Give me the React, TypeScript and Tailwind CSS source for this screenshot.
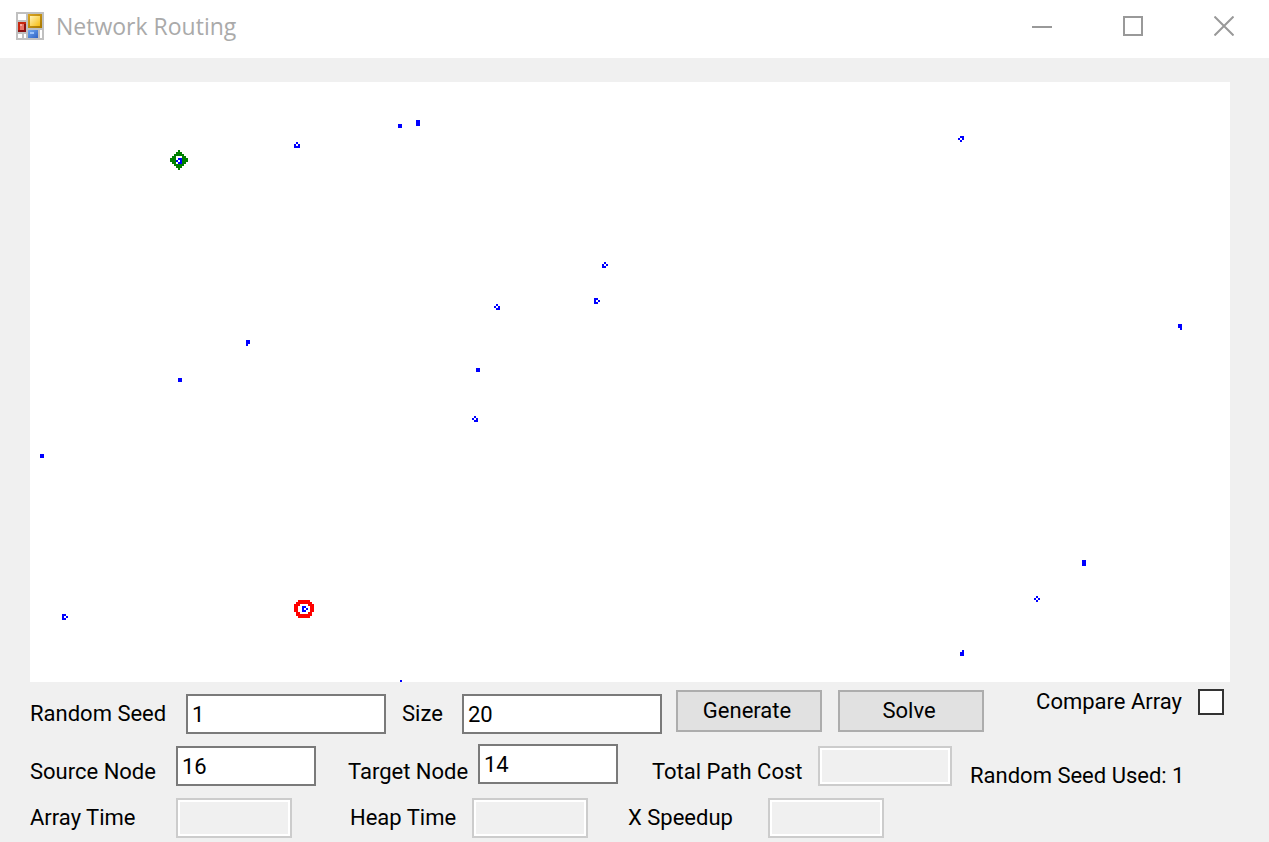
import { useState } from "react";
import type { ReactNode } from "react";

type Sprite = { x: number; y: number; rows: string[] };

const BLOCK = ["##", "##"];
const TALL = ["##", "##", "##"];
const ARROW = ["##.", "#.#", "##."];

// Canvas cells, each one drawn as a unit square of the view box.
const nodes: Sprite[] = [
  { x: 132, y: 30, rows: [".#.", "#.#", "###"] },
  { x: 184, y: 21, rows: BLOCK },
  { x: 193, y: 19, rows: TALL },
  { x: 464, y: 27, rows: [".##", "#.#", ".#."] },
  { x: 286, y: 90, rows: [".#.", "#.#", "##."] },
  { x: 282, y: 108, rows: ARROW },
  { x: 232, y: 111, rows: [".#.", "#.#", ".##"] },
  { x: 223, y: 143, rows: BLOCK },
  { x: 221, y: 167, rows: [".#.", "#.#", ".##"] },
  { x: 108, y: 129, rows: ["##", "##", "#."] },
  { x: 74, y: 148, rows: BLOCK },
  { x: 5, y: 186, rows: BLOCK },
  { x: 16, y: 266, rows: ARROW },
  { x: 136, y: 262, rows: ARROW },
  { x: 185, y: 299, rows: ["#"] },
  { x: 574, y: 121, rows: ["##", "##", ".#"] },
  { x: 526, y: 239, rows: TALL },
  { x: 502, y: 257, rows: [".#.", "#.#", ".#."] },
  { x: 465, y: 284, rows: [".#", "##", "##"] },
  { x: 73, y: 38, rows: [".##", "#.#", ".##"] },
];

const sourceMarker: Sprite = {
  x: 70,
  y: 34,
  rows: [
    "....#....",
    "...###...",
    "..#####..",
    ".##...##.",
    "###...###",
    "###...###",
    ".##...##.",
    "..#####..",
    "...###...",
    "....#....",
  ],
};

const targetMarker: Sprite = {
  x: 132,
  y: 259,
  rows: [
    "..######..",
    ".########.",
    "###....###",
    "##......##",
    "##......##",
    "##......##",
    ".##....##.",
    ".########.",
    "..######..",
  ],
};

function spritePath({ x, y, rows }: Sprite) {
  return rows
    .flatMap((row, r) =>
      [...row].map((c, i) => (c === "#" ? `M${x + i} ${y + r}h1v1h-1z` : "")),
    )
    .join("");
}

function AppIcon() {
  return (
    <svg viewBox="0 0 14 14" className="size-7" shapeRendering="crispEdges" aria-hidden="true">
      <defs>
        <linearGradient id="gold" x1="0" y1="0" x2="1" y2="1">
          <stop offset="0" stopColor="#fff3b8" />
          <stop offset="1" stopColor="#f7bd10" />
        </linearGradient>
        <linearGradient id="goldEdge" x1="0" y1="0" x2="1" y2="1">
          <stop offset="0" stopColor="#dba520" />
          <stop offset="1" stopColor="#a87800" />
        </linearGradient>
        <linearGradient id="sky" x1="0" y1="0" x2="1" y2="1">
          <stop offset="0" stopColor="#6fa8f0" />
          <stop offset="1" stopColor="#2f62c4" />
        </linearGradient>
      </defs>
      <path fill="#c0c0c0" d="M0 0h14v14H0z" />
      <path fill="#fff" d="M1 1h4v3H1zM1 11h2v2H1zM4 11h1v2H4zM12 9h1v4h-1z" />
      <path fill="url(#goldEdge)" d="M6 1h7v7H6z" />
      <path fill="url(#gold)" d="M7 2h5v5H7z" />
      <path fill="#c8260f" d="M1 5h4v5H1z" />
      <path fill="#8c1212" d="M4 6h1v4H1V9h3z" />
      <path fill="#e87468" d="M2 6h2v3H2z" />
      <path fill="#f7aaa2" d="M2 6h1v1H2z" />
      <path fill="url(#sky)" d="M6 9h5v4H6z" />
      <path fill="#9cc4fa" d="M7 10h2v1H7z" />
    </svg>
  );
}

function CaptionButton({ label, children }: { label: string; children: ReactNode }) {
  return (
    <button type="button" aria-label={label} className="flex h-13 w-[91px] items-center justify-center">
      <svg viewBox="0 0 20 20" className="size-5" fill="none" stroke="#999" strokeWidth="2" aria-hidden="true">
        {children}
      </svg>
    </button>
  );
}

const entry = "h-10 border-2 border-[#7a7a7a] bg-white px-1 leading-8 outline-none";
const readout = "h-10 border-2 border-[#ccc] bg-[#f0f0f0] px-1 shadow-[inset_0_0_0_2px_#fff] outline-none";
const action = "h-[42px] w-[146px] shrink-0 border-2 border-[#adadad] bg-[#e1e1e1] pr-1";

export default function App() {
  const [seed, setSeed] = useState("1");
  const [size, setSize] = useState("20");
  const [source, setSource] = useState("16");
  const [target, setTarget] = useState("14");

  return (
    <div className="min-h-screen bg-[#f0f0f0] font-['Roboto',sans-serif] text-[22px] leading-7 text-black">
      <header className="flex h-[58px] items-start bg-white pl-4">
        <div className="flex items-center gap-3 pt-2">
          <AppIcon />
          <h1 className="font-['Open_Sans',sans-serif] text-[23px] leading-9 text-[#aaa]">Network Routing</h1>
        </div>
        <div className="ml-auto flex">
          <CaptionButton label="Minimize">
            <path d="M0 11h20" />
          </CaptionButton>
          <CaptionButton label="Maximize">
            <path d="M1 1h18v18H1z" />
          </CaptionButton>
          <CaptionButton label="Close">
            <path d="M.5 .5l19 19M19.5 .5l-19 19" />
          </CaptionButton>
        </div>
      </header>

      <main className="pt-6 pr-[39px] pl-[30px]">
        <svg viewBox="0 0 600 300" className="block w-full bg-white" shapeRendering="crispEdges" role="img" aria-label="Node map">
          <path fill="#008000" d={spritePath(sourceMarker)} />
          <path fill="#f00" d={spritePath(targetMarker)} />
          <path fill="#00f" d={nodes.map(spritePath).join("")} />
        </svg>

        <form className="pt-[6px] whitespace-nowrap" onSubmit={(e) => e.preventDefault()}>
          <div className="flex items-center">
            <div className="flex items-center self-end">
              <label htmlFor="seed" className="w-[156px]">Random Seed</label>
              <input id="seed" value={seed} onChange={(e) => setSeed(e.target.value)} className={`${entry} w-[200px]`} />
            </div>
            <div className="ml-4 flex items-center self-end">
              <label htmlFor="size" className="w-[60px]">Size</label>
              <input id="size" value={size} onChange={(e) => setSize(e.target.value)} className={`${entry} w-[200px]`} />
            </div>
            <div className="ml-[14px] flex gap-4 py-[2px]">
              <button type="button" className={action}>Generate</button>
              <button type="submit" className={action}>Solve</button>
            </div>
            <label className="mr-[6px] mb-[18px] ml-auto flex items-center gap-4">
              Compare Array
              <input type="checkbox" className="size-[26px] appearance-none border-2 border-[#333] bg-white checked:bg-[#333]" />
            </label>
          </div>

          <div className="mt-[10px] flex min-h-[46px] items-start">
            <div className="flex items-end pt-[2px]">
              <label htmlFor="source" className="w-[146px]">Source Node</label>
              <input id="source" value={source} onChange={(e) => setSource(e.target.value)} className={`${entry} w-[140px]`} />
            </div>
            <div className="ml-8 flex h-[42px] items-start">
              <label htmlFor="target" className="w-[130px] self-end">Target Node</label>
              <input id="target" value={target} onChange={(e) => setTarget(e.target.value)} className={`${entry} w-[140px]`} />
            </div>
            <div className="ml-[34px] flex items-end pt-[2px]">
              <label htmlFor="cost" className="w-[166px]">Total Path Cost</label>
              <input id="cost" readOnly className={`${readout} w-[134px]`} />
            </div>
            <p className="ml-[18px] self-end">Random Seed Used: 1</p>
          </div>

          <div className="mt-2 flex items-center">
            <label htmlFor="array-time" className="w-[146px]">Array Time</label>
            <input id="array-time" readOnly className={`${readout} w-[116px]`} />
            <label htmlFor="heap-time" className="ml-[58px] w-[122px]">Heap Time</label>
            <input id="heap-time" readOnly className={`${readout} w-[116px]`} />
            <label htmlFor="speedup" className="ml-10 w-[140px]">X Speedup</label>
            <input id="speedup" readOnly className={`${readout} w-[116px]`} />
          </div>
        </form>
      </main>
    </div>
  );
}
